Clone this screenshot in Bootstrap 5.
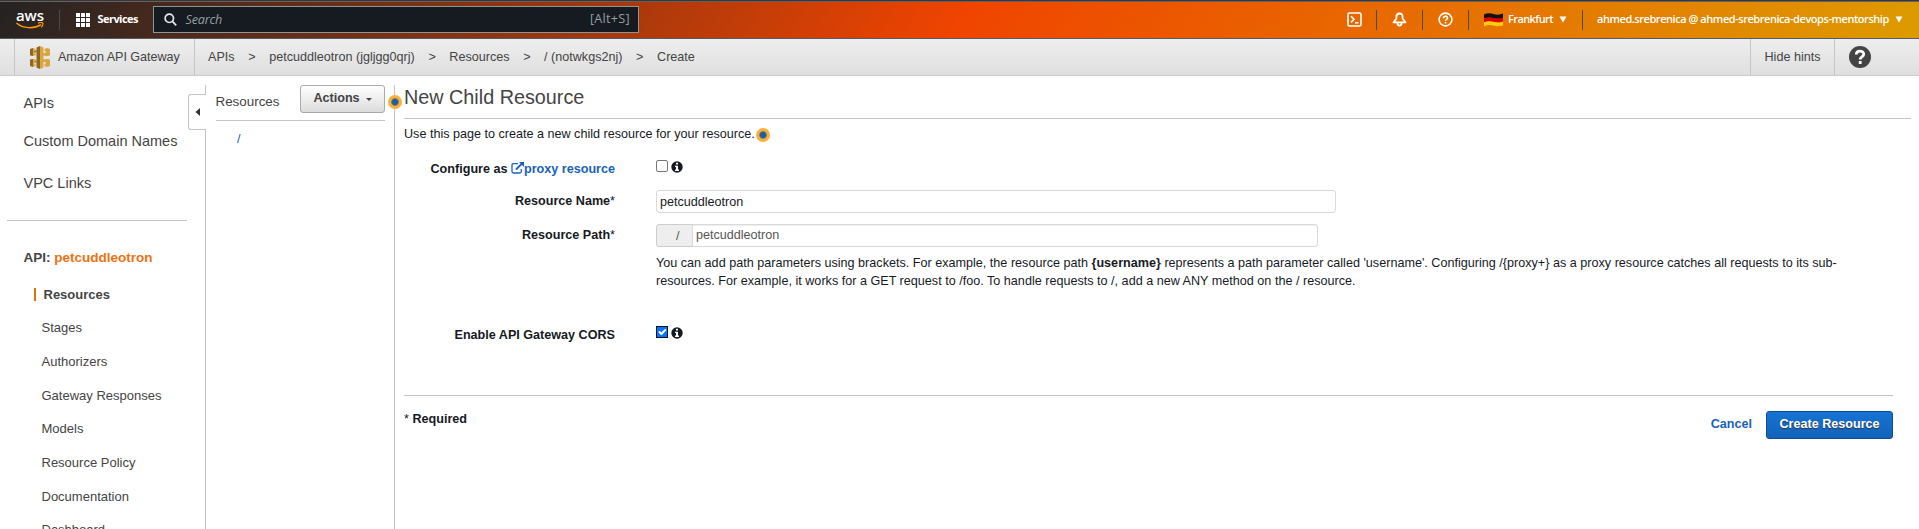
<!DOCTYPE html>
<html lang="en">
<head>
<meta charset="utf-8">
<meta name="viewport" content="width=device-width, initial-scale=1">
<title>API Gateway</title>
<link rel="stylesheet" href="https://cdn.jsdelivr.net/npm/bootstrap@5.3.0/dist/css/bootstrap.min.css">
<style>
body{font:12.6px/18px "Liberation Sans",Arial,sans-serif;color:#16191f;height:529px;overflow:hidden;background:#fff}
a{text-decoration:none;color:inherit}
svg{display:block;flex:none}
.topbar{height:39px;border-top:1px solid #37373b;border-bottom:1px solid #545b64;background:linear-gradient(120deg,#232323 0%,#f04400 50%,#dd9b00 100%);box-shadow:inset 0 1px #66605f;color:#fff;font:600 11px/16px "Open Sans","Noto Sans",sans-serif}
.brand{width:28px;margin-left:16px}
.brand span{display:block;font:600 15px/12px "Open Sans",sans-serif;height:13px;letter-spacing:-.1px;margin-top:-1px}
.sep{width:1px;height:20px;background:#4c4c50;flex:none}
.brand+.sep{margin-left:15px}
.svc{margin-left:7.5px;width:40.5px;letter-spacing:-.55px;font-weight:700;white-space:nowrap;margin-top:-1px}
.searchbox{width:486px;height:27px;background:#161a21;border:1px solid #8d9596;margin-left:15px;padding:0 8px 0 9.5px;color:#95a0a0;font-weight:400;font-size:12.6px}
.q{margin-left:9px;letter-spacing:-.2px}
.searchbox .ms-auto{letter-spacing:.3px;margin-top:-1px}
.tools{padding-right:15px;white-space:nowrap}
.tools .sep{margin:0 15px}
.tools .term{margin-right:-1px}
.tools .flag{margin:0 6px 0 0}
.tools .ar{margin-left:5px}
.tools .user+.ar{margin-left:4px;margin-right:1px}
.tools span{margin-top:-1px}
.tools .region{width:45px;letter-spacing:-.6px;margin-left:-1px;margin-right:1px}
.tools .user{width:293px;letter-spacing:-.45px;margin-left:-1px;margin-right:1px}
.crumbbar{height:37px;background:linear-gradient(#eee,#dfdfdf);border-bottom:1px solid #ccc;color:#444}
.crumbbar>div{height:36px}
.service{width:181px;margin-left:14px;border:solid #c5c5c5;border-width:0 1px;padding-left:15px}
.service span{margin-left:8px;letter-spacing:-.04px}
.crumbs{padding-left:13px;gap:13.6px}
.hints{border:solid #c5c5c5;border-width:0 1px;width:85px;margin-left:auto}
.helpcell{width:84px;padding-left:14px}
.page{height:453px}
.side{width:205px;color:#444;flex:none}
.side .main{padding-top:18px}
.side .main a{display:block;font-size:14.5px;padding-left:23.5px}
.main a+a{margin-top:20px}
.main a:last-child{margin-top:24px!important}
.side hr,.treecol hr,.content hr{margin:0;border-top:1px solid #c4c4c4;opacity:1}
.side hr{margin:28px 18px 0 7px}
.apihead{font-size:13.5px;font-weight:700;padding-left:23.5px;margin-top:28px}
.apihead span{color:#ec7211}
.sub{font-size:13px;margin-top:18.5px}
.sub a{display:block;height:33.7px;padding-left:41.5px}
.sub a.on{font-weight:700;padding-left:34px}
.on span{border-left:2px solid #e07700;display:inline-block;line-height:13px;padding-left:7.5px}
.treecol{width:190px;margin-top:9px;border:solid #c4c4c4;border-width:0 1px;padding:0 9px 0 10px;flex:none;position:relative}
.treehead{height:35px}
.treehead span{font-size:13.4px;color:#444;margin:8px 0 0 -.5px}
.root{padding:9px 0 0 21px}
.fold{position:absolute;left:-18px;top:9px;width:18px;height:36px;background:#fff;border:1px solid #c4c4c4;border-right:0;border-radius:3px 0 0 3px;padding-left:6px}
.fold::after{content:"";position:absolute;right:-1px;top:0;width:2px;height:34px;background:#fff}
.actions{width:85px;height:28px;border:1px solid #aaa;border-radius:3px;background:linear-gradient(#fff,#dcdcdc);font-size:12.6px;font-weight:700;color:#444;padding:0 0 3px;line-height:18px;box-shadow:none}
.actions::after{border-width:3px;border-bottom:0;margin-left:6px;vertical-align:1px}
.dot{width:14px;height:14px;border-radius:50%;background:radial-gradient(circle,#1a5f9e 0 2.5px,#6c7b70 3.4px,#fbb03b 4.4px)}
.dot.over{position:absolute;right:-8px;top:10px;z-index:2}
.content{width:1507px;margin-left:9px;padding-top:12px}
.content h1{font-size:19.8px;line-height:18px;font-weight:400;color:#444;margin:0 0 12px}
.intro{margin-top:6px}
.intro .dot{margin:1px 0 0 1.5px}
.frow{display:flex}
.lab{width:211px;text-align:right;font-weight:700;margin-right:41px;flex:none}
.lab i{font-style:normal;font-weight:400}
.pt-name{padding-top:2px}
.pt-proxy{padding:1px 0}
.lnk{color:#1862b8}
.chk{width:12px;height:12px;margin:0;border-radius:2px!important;border:1px solid #767676}
.chk:checked{background-color:#0075ff;border-color:#111;border-radius:0!important;background-size:13px}
.inf{margin:1px 0 0 3px}
.inp{width:680px;height:23px;border:1px solid #d9d9d9;border-radius:3px;padding:0 3px;font-size:12.6px;line-height:18px;color:#16191f}
.pathgrp{width:662px;height:23px}
.pathgrp .input-group-text{width:37px;background:#eee;border:1px solid #ccc;border-radius:3px;padding:0 0 0 19px;font-size:12.6px;line-height:18px;color:#555}
.pathgrp .inp{height:23px;color:#555;background:#fff;box-shadow:inset 0 1px 1px #eee;line-height:17px;padding-bottom:2px}
.note{margin:7px 0 0 252px;width:1205px;letter-spacing:.007px}
.create{width:127px;height:28px;margin-top:1px;border:1px solid #0c4d92;border-radius:3px;padding:0 0 3px;background:linear-gradient(#1573d3,#1363b9);color:#fff;font-weight:700;font-size:12.6px;line-height:18px;text-shadow:0 1px 1px #333}
.foot{width:1489px;margin-top:51px}
.footrow{padding-top:14px}
.cancel{margin:5px 14px 0 0;font-weight:700}
</style>
</head>
<body>
<header class="topbar d-flex align-items-center">
  <a class="brand" href="#"><span>aws</span>
    <svg width="28" height="7" viewBox="0 0 28 7" fill="none" stroke="#f90" stroke-width="1.5"><path d="M.5 1C7 6.800 18 7 25 2.600"/><path d="M22 1.100c2-.7 4.200-.7 4.800 0 .4.900-.5 3-1.600 4.200" stroke-width="1.200"/></svg>
  </a>
  <div class="sep"></div>
  <svg class="ms-3" width="14" height="14" viewBox="0 0 14 14" fill="#fff"><path d="M0 0h4v4H0zM5 0h4v4H5zM10 0h4v4h-4zM0 5h4v4H0zM5 5h4v4H5zM10 5h4v4h-4zM0 10h4v4H0zM5 10h4v4H5zM10 10h4v4h-4z"/></svg>
  <a href="#" class="svc">Services</a>
  <div class="searchbox d-flex align-items-center">
    <svg width="13" height="13" viewBox="0 0 13 13" fill="none" stroke="#e8eaea" stroke-width="1.700"><circle cx="5.300" cy="5.300" r="4.200"/><path d="M8.400 8.400l3.800 3.900"/></svg>
    <em class="q">Search</em><span class="ms-auto">[Alt+S]</span>
  </div>
  <div class="tools d-flex align-items-center ms-auto">
    <svg class="term" width="15" height="15" viewBox="0 0 15 15" fill="none" stroke="#fff" stroke-width="1.600"><rect x="1" y="1" width="13" height="13" rx="1.500"/><path d="M4 4.200l3 3.100-3 3.100M8 10.700h3.500"/></svg>
    <div class="sep"></div>
    <svg width="15" height="15" viewBox="0 0 15 15" fill="none" stroke="#fff" stroke-width="1.800" stroke-linejoin="round"><path d="M7.500 1.500C5.200 1.500 4.400 3 4.400 5v1.800L1.500 10.300h12L10.600 6.800V5c0-2-.8-3.500-3.100-3.500z"/><path d="M5.400 10.800c0 3.800 4.200 3.800 4.200 0"/></svg>
    <div class="sep"></div>
    <svg width="15" height="15" viewBox="0 0 15 15" fill="none" stroke="#fff" stroke-width="1.600"><circle cx="7.500" cy="7.500" r="6.400"/><path d="M5.500 6.200c0-2.700 4-2.600 4-.3 0 1.500-2 1.400-2 3M7.500 9.900v1.600"/></svg>
    <div class="sep"></div>
    <svg class="flag" width="19" height="14" viewBox="0 0 19 14"><path d="M0 1.500Q4.500-.8 9.500.9T19 .5V5.200Q14 6.500 9.500 5.200T0 5.600z" fill="#111"/><path d="M0 5.400Q4.500 3.400 9.500 4.900T19 4.700V9Q14 10.300 9.500 9T0 9.500z" fill="#d00"/><path d="M0 9.300Q4.500 7.300 9.500 8.800T19 8.600v4Q14 13.900 9.500 12.600T0 13.300z" fill="#ffce00"/></svg>
    <span class="region">Frankfurt</span>
    <svg class="ar" width="8" height="7" viewBox="0 0 8 7" fill="#fff"><path d="M.5.500h7L4 6.500z"/></svg>
    <div class="sep"></div>
    <span class="user">ahmed.srebrenica @ ahmed-srebrenica-devops-mentorship</span>
    <svg class="ar" width="8" height="7" viewBox="0 0 8 7" fill="#fff"><path d="M.5.500h7L4 6.500z"/></svg>
  </div>
</header>
<nav class="crumbbar d-flex">
  <div class="service d-flex align-items-center">
    <svg width="20" height="23" viewBox="0 0 20 23"><path d="M0 3l3-1v8l-3-.5zM0 13.500l3-.5v8l-3-1zM6.500 1.500L10 0v23l-3.500-1.500z" fill="#8d6623"/><path d="M3 4.500h3.500v2H3zM3 14.500h3.500v2H3z" fill="#8d6623"/><path d="M3 2l2.500 1v2H4.500v2.500h2V9L3 10zM3 13l3.500.6v2h-2V18h1v2L3 21zM10 0l3.500 1.500v20L10 23zM13.500 7h2V5h-1V3L17 2l3 1v6.500l-3 .7-3.500-.7zM13.500 13.500l3.500-.5 3 .5V20l-3 1-2.500-1v-2h1v-2h-2z" fill="#d9a741"/></svg>
    <span>Amazon API Gateway</span>
  </div>
  <div class="crumbs d-flex align-items-center"><a href="#">APIs</a><span>&gt;</span><a href="#">petcuddleotron (jgljgg0qrj)</a><span>&gt;</span><a href="#">Resources</a><span>&gt;</span><a href="#">/ (notwkgs2nj)</a><span>&gt;</span><span>Create</span></div>
  <div class="hints d-flex align-items-center justify-content-center">Hide hints</div>
  <div class="helpcell d-flex align-items-center"><svg width="22" height="22" viewBox="0 0 22 22"><circle cx="11" cy="11" r="11" fill="#444"/><path d="M7.300 8.600c0-4.700 7.400-4.500 7.400-.4 0 2.700-3.500 2.700-3.500 5.300M11.200 14.900v3" fill="none" stroke="#fff" stroke-width="2.800"/></svg></div>
</nav>
<div class="page d-flex">
  <aside class="side">
    <div class="main"><a href="#">APIs</a><a href="#">Custom Domain Names</a><a href="#">VPC Links</a></div>
    <hr>
    <div class="apihead">API: <span>petcuddleotron</span></div>
    <div class="sub"><a class="on" href="#"><span>Resources</span></a><a href="#">Stages</a><a href="#">Authorizers</a><a href="#">Gateway Responses</a><a href="#">Models</a><a href="#">Resource Policy</a><a href="#">Documentation</a><a href="#">Dashboard</a></div>
  </aside>
  <section class="treecol">
    <div class="fold d-flex align-items-center"><svg width="5" height="8" viewBox="0 0 5 8"><path d="M5 0v8L.5 4z" fill="#333"/></svg></div>
    <div class="treehead d-flex justify-content-between"><span>Resources</span><button class="btn actions dropdown-toggle">Actions</button></div>
    <hr>
    <a href="#" class="lnk root d-block">/</a>
    <div class="dot over"></div>
  </section>
  <main class="content">
    <h1>New Child Resource</h1>
    <hr>
    <div class="intro d-flex align-items-center"><span>Use this page to create a new child resource for your resource.</span><i class="dot"></i></div>
    <div class="frow mt-3"><label class="lab pt-proxy">Configure as <a href="#" class="lnk"><svg class="d-inline-block" style="vertical-align:-1px" width="13" height="12" viewBox="0 0 13 12" fill="none" stroke="#1862b8" stroke-width="1.300"><path d="M7 1.700H2.500Q1 1.700 1 3.200v6.300Q1 11 2.500 11h6.300q1.500 0 1.500-1.500V7"/><path d="M5 7.500L11 1.500" stroke-width="1.800"/><path d="M8 0h5v5z" fill="#1862b8" stroke="none"/></svg>proxy resource</a></label>
      <input type="checkbox" class="form-check-input chk" style="margin-top:1px"><svg class="inf" style="margin-top:2px" width="12" height="12" viewBox="0 0 12 12"><circle cx="6" cy="6" r="5.700" fill="#16191f"/><path d="M5 1.800h2v1.800H5zM4 4.700h3v3.900h1V10H4V8.600h1V6H4z" fill="#fff"/></svg></div>
    <div class="frow" style="margin-top:11px"><label class="lab pt-name">Resource Name<i>*</i></label><input class="form-control inp" value="petcuddleotron"></div>
    <div class="frow" style="margin-top:11px"><label class="lab pt-name">Resource Path<i>*</i></label><div class="input-group flex-nowrap pathgrp"><span class="input-group-text">/</span><input class="form-control inp" value="petcuddleotron"></div></div>
    <div class="note">You can add path parameters using brackets. For example, the resource path <b>{username}</b> represents a path parameter called 'username'. Configuring /{proxy+} as a proxy resource catches all requests to its sub-resources. For example, it works for a GET request to /foo. To handle requests to /, add a new ANY method on the / resource.</div>
    <div class="frow" style="margin-top:36px"><label class="lab">Enable API Gateway CORS</label><input type="checkbox" class="form-check-input chk" checked><svg class="inf" width="12" height="12" viewBox="0 0 12 12"><circle cx="6" cy="6" r="5.700" fill="#16191f"/><path d="M5 1.800h2v1.800H5zM4 4.700h3v3.900h1V10H4V8.600h1V6H4z" fill="#fff"/></svg></div>
    <div class="foot"><hr>
      <div class="footrow d-flex"><b><span class="fw-normal">*</span> Required</b><a href="#" class="lnk cancel ms-auto">Cancel</a><button class="btn create">Create Resource</button></div>
    </div>
  </main>
</div>
<script src="https://cdn.jsdelivr.net/npm/bootstrap@5.3.0/dist/js/bootstrap.bundle.min.js"></script>
</body>
</html>
